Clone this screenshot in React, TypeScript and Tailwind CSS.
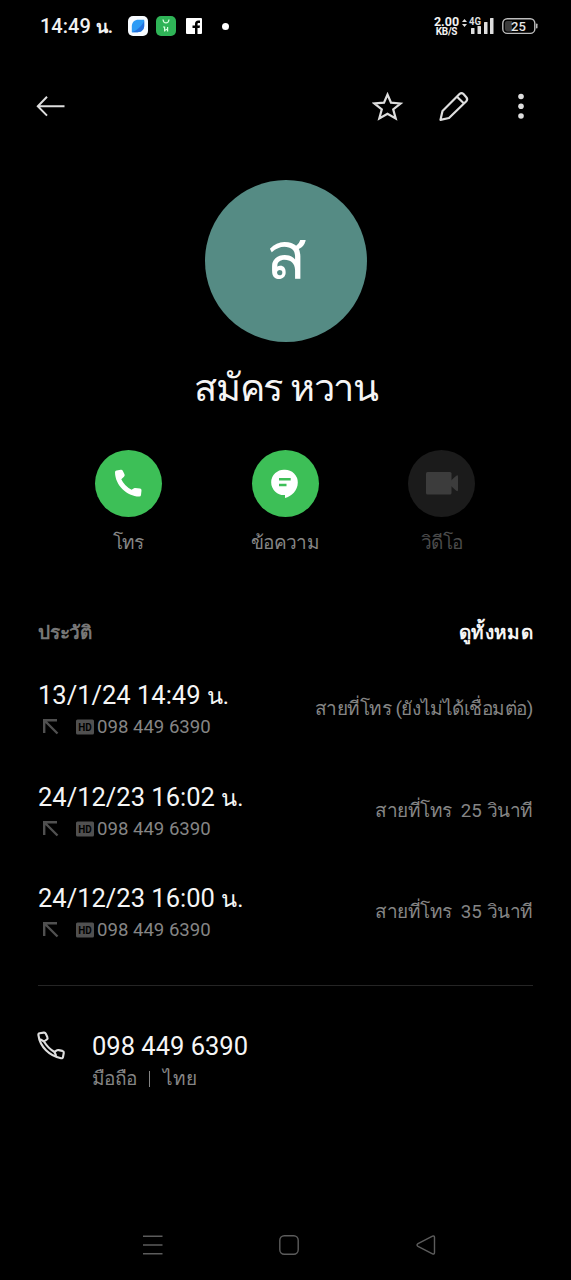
import React from 'react';

interface CallEntry {
    time: string;
    number: string;
    status: string;
    duration?: string;
    unit?: string;
}

const calls: CallEntry[] = [
    { time: '13/1/24 14:49', number: '098 449 6390', status: 'สายที่โทร (ยังไม่ได้เชื่อมต่อ)' },
    { time: '24/12/23 16:02', number: '098 449 6390', status: 'สายที่โทร', duration: '25', unit: 'วินาที' },
    { time: '24/12/23 16:00', number: '098 449 6390', status: 'สายที่โทร', duration: '35', unit: 'วินาที' },
];

const StatusBar: React.FC = () => (
    <div className="flex h-[52px] items-center pl-[40px] pr-[33px] text-[#f2f2f2]">
        <span className="w-[88px] whitespace-nowrap text-[20px] leading-[28px] font-medium">14:49 <span className="text-[18px] font-bold">น.</span></span>
        <svg className="h-5 w-5" viewBox="0 0 20 20">
            <rect width="20" height="20" rx="5" fill="#f7fbff" />
            <path d="M3.8 16.2V10.5C3.8 6.5 6.5 3.8 10.5 3.8H16.2V9.5C16.2 13.5 13.5 16.2 9.5 16.2Z" fill="#2d9bf5" />
            <path d="M3.8 16.2C9 14.5 14 10 16.2 5V9.5C16.2 13.5 13.5 16.2 9.5 16.2Z" fill="#2470dc" />
        </svg>
        <svg className="ml-2 h-5 w-5" viewBox="0 0 20 20" fill="none">
            <rect width="20" height="20" rx="5" fill="#2fb457" />
            <path d="M7 3.5C7.5 8 12.5 8 13 3.5" stroke="#d8ffe0" strokeWidth="1.2" />
            <path d="M7 11H8.6V15.5M11.6 11V15.5M8.6 14.5L11.6 13" stroke="#d8ffe0" strokeWidth="1.2" />
        </svg>
        <svg className="ml-[10px] h-4 w-4" viewBox="0 0 16 16">
            <rect width="16" height="16" rx="1" fill="#fff" />
            <path d="M9 16V10H6.5V7.5H9V6C9 3.8 10.2 2.5 12.3 2.5H14V5H12.7C11.8 5 11.5 5.4 11.5 6.2V7.5H14L13.6 10H11.5V16Z" fill="#000" />
        </svg>
        <span className="ml-[20px] h-[7px] w-[7px] rounded-full bg-white" />
        <div className="ml-auto flex w-[27px] flex-col items-center font-bold">
            <span className="text-[12.5px] leading-[11px]">2.00</span>
            <span className="text-[10px] leading-[9px] tracking-[-0.3px]">KB/S</span>
        </div>
        <svg className="ml-[2px] h-[22px] w-[34px]" viewBox="0 0 34 22" fill="#dedede">
            <path d="M0 7L2.5 4L5 7ZM0 9L2.5 12L5 9Z" />
            <text x="7" y="9.5" fontSize="10" fontWeight="700" textLength="12" lengthAdjust="spacingAndGlyphs">4G</text>
            <rect x="9" y="13" width="3.5" height="6" rx="0.5" />
            <rect x="15.5" y="11" width="3.5" height="8" rx="0.5" />
            <rect x="22" y="7" width="3.5" height="12" rx="0.5" />
            <rect x="28" y="3" width="3.5" height="16" rx="0.5" />
        </svg>
        <svg className="ml-[6px] h-[18px] w-9" viewBox="0 0 36 18">
            <rect x="0.8" y="1.8" width="32" height="14.6" rx="4.5" fill="none" stroke="#bdbdbd" strokeWidth="1.4" />
            <path d="M5 4H10V14.5H5Q3 14 3 12V6Q3 4 5 4Z" fill="#3b3b3b" />
            <rect x="34" y="6.5" width="1.5" height="5" rx="0.7" fill="#bdbdbd" />
            <text x="16.5" y="13.5" fontSize="13" fontWeight="500" textAnchor="middle" fill="#e6e6e6">25</text>
        </svg>
    </div>
);

const Toolbar: React.FC = () => (
    <div className="flex h-[108px] items-center pl-[36px] pr-[46px]">
        <svg className="h-7 w-[30px]" viewBox="0 0 30 28" fill="none" stroke="#dedede" strokeWidth="2">
            <path d="M28.5 14.2H2M11 4.8L1.8 14.2L11 23.6" />
        </svg>
        <svg className="ml-auto h-8 w-8" viewBox="0 0 32 32" fill="none" stroke="#dedede" strokeWidth="2.2">
            <path d="M15.5 4.5L19 12.7L28.5 13.5L21.2 19.4L23.7 28.5L15.5 23.7L7.3 28.5L9.8 19.4L2.5 13.5L12 12.7Z" />
        </svg>
        <svg className="ml-[34px] h-8 w-8" viewBox="0 0 32 32" fill="none" stroke="#dedede" strokeWidth="2.2" strokeLinejoin="round">
            <path d="M2.5 29.8L4.5 21L21.5 4Q23.5 2.2 25.5 4L28.3 7.2Q30 9.2 28.3 11.2L11 28Z" />
            <path d="M19 6.7L26 13.5" />
        </svg>
        <svg className="ml-[47px] h-8 w-2" viewBox="0 0 8 32" fill="#dedede">
            <circle cx="4" cy="6.5" r="2.8" />
            <circle cx="4" cy="16.2" r="2.8" />
            <circle cx="4" cy="26" r="2.8" />
        </svg>
    </div>
);

const PhoneIcon: React.FC = () => (
    <svg className="h-[30px] w-[30px]" viewBox="0 0 30 30" fill="#fff">
        <path d="M2 4.2Q2 2.8 3.5 2.6L7.8 1.8Q9.2 1.6 9.9 2.9L11.5 6.2Q12.1 7.6 11 8.7L8.3 11.3Q11.5 18.2 18.6 21.8L20.2 20.7Q21 20 22.2 20.1L27 20.6Q28.6 20.8 28.5 22.4L28 27Q27.8 28.7 26.1 28.6C14 28 2.2 17.5 2 4.2Z" />
    </svg>
);

const MessageIcon: React.FC = () => (
    <svg className="h-[30px] w-[30px]" viewBox="0 0 30 30">
        <path d="M15 1.7A12.7 12.7 0 1 0 15 27V30C21.5 28.2 27.8 22.5 27.8 14.4A12.8 12.7 0 0 0 15 1.7Z" fill="#fff" />
        <path d="M9 11.3H20.7M9 17H16.5" stroke="#3dbf57" strokeWidth="2.4" />
    </svg>
);

const VideoIcon: React.FC = () => (
    <svg className="h-6 w-[34px]" viewBox="0 0 34 24" fill="#3c3c3c">
        <rect x="1" y="1" width="25.5" height="22.5" rx="1.5" />
        <path d="M26 9.5L31 5Q33 3.5 33 5.5V19Q33 21 31 19.5L26 15Z" />
    </svg>
);

const Action: React.FC<{ label: string; disabled?: boolean; children: React.ReactNode }> = ({ label, disabled, children }) => (
    <button className="flex w-[156.7px] flex-col items-center">
        <span className={`flex h-[67px] w-[67px] items-center justify-center rounded-full ${disabled ? 'bg-[#1b1b1b]' : 'bg-[#3dbf57]'}`}>
            {children}
        </span>
        <span className={`mt-[12px] text-[19px] leading-[28px] tracking-[-0.7px] whitespace-nowrap ${disabled ? 'text-[#4b4b4b]' : 'text-[#858585]'}`}>{label}</span>
    </button>
);

const CallRow: React.FC<{ call: CallEntry }> = ({ call }) => (
    <div className="flex h-[101.7px] items-start justify-between">
        <div>
            <div className="h-[34px] text-[25.5px] leading-[34px] whitespace-nowrap text-[#f5f5f5]">{call.time} <span className="text-[23.5px]">น.</span></div>
            <div className="mt-[2px] flex h-[26px] items-center text-[18.6px] leading-[26px] text-[#858585]">
                <svg className="ml-[5px] h-4 w-4" viewBox="0 0 16 16" fill="none" stroke="#505050" strokeWidth="2.4">
                    <path d="M1.2 14V1.2H14M1.5 1.5L14.5 14.5" />
                </svg>
                <svg className="ml-[17px] h-4 w-[18px]" viewBox="0 0 18 16">
                    <rect width="18" height="15" y="0.5" rx="1.5" fill="#505050" />
                    <text x="9" y="12.2" fontSize="11.5" fontWeight="700" textAnchor="middle" fill="#000" textLength="13.5" lengthAdjust="spacingAndGlyphs">HD</text>
                </svg>
                <span className="ml-[3px] whitespace-nowrap">{call.number}</span>
            </div>
        </div>
        <div className="mt-[17px] flex items-baseline text-[19px] leading-[28px] tracking-[-0.47px] whitespace-nowrap text-[#858585]">
            <span>{call.status}</span>
            {call.duration && <span className="mr-[5px] ml-[9px] text-[18.7px] tracking-normal">{call.duration}</span>}
            {call.unit && <span>{call.unit}</span>}
        </div>
    </div>
);

const NavBar: React.FC = () => (
    <div className="mt-auto flex h-[70px] items-center pl-[143px] pr-[135px]">
        <svg className="h-5 w-5" viewBox="0 0 20 20" stroke="#5c5c5c" strokeWidth="1.4">
            <path d="M0 1.2H19.5M0 10H19.5M0 18.8H19.5" />
        </svg>
        <svg className="ml-[116px] h-5 w-5" viewBox="0 0 20 20" fill="none" stroke="#5c5c5c" strokeWidth="1.4">
            <rect x="0.8" y="0.8" width="18.4" height="18.4" rx="4.5" />
        </svg>
        <svg className="ml-auto h-5 w-5" viewBox="0 0 20 20" fill="none" stroke="#5c5c5c" strokeWidth="1.4" strokeLinejoin="round">
            <path d="M2 8.7L16.5 1.2Q18.5 0.4 18.5 2.5V17.5Q18.5 19.6 16.5 18.8L2 11.3Q0 10 2 8.7Z" />
        </svg>
    </div>
);

export default function App() {
    return (
        <div className="flex h-[1280px] w-[571px] flex-col overflow-hidden bg-black font-[Roboto,'Noto_Sans',sans-serif]">
            <StatusBar />
            <Toolbar />

            <div className="mt-[19.5px] ml-px flex flex-col items-center">
                <div className="flex h-[162px] w-[162px] items-center justify-center rounded-full bg-[#558b84] pb-[10px] text-[67px] leading-[80px] text-white">ส</div>
                <h1 className="mt-[20px] h-[52px] text-[38px] leading-[52px] tracking-[-1.3px] whitespace-nowrap text-[#f5f5f5]">สมัคร หวาน</h1>
            </div>

            <div className="mt-[36px] -ml-px flex justify-center">
                <Action label="โทร"><PhoneIcon /></Action>
                <Action label="ข้อความ"><MessageIcon /></Action>
                <Action label="วิดีโอ" disabled><VideoIcon /></Action>
            </div>

            <div className="mt-[62px] flex h-[28px] items-center justify-between px-[38px] text-[19px] leading-[28px] font-bold">
                <span className="tracking-[-0.2px] text-[#777777]">ประวัติ</span>
                <span className="tracking-[0.3px] text-[#f5f5f5]">ดูทั้งหมด</span>
            </div>

            <div className="mt-[31.5px] px-[38px]">
                {calls.map((call) => (
                    <CallRow key={call.time} call={call} />
                ))}
            </div>

            <div className="mx-[38px] mt-[1.5px] h-px shrink-0 bg-[#252525]" />

            <div className="mt-[43px] flex pl-[36px]">
                <svg className="mt-px h-[30px] w-[30px]" viewBox="0 0 30 30" fill="none" stroke="#dedede" strokeWidth="2.1" strokeLinejoin="round">
                    <path d="M2.4 5Q2.2 3.5 3.7 3.2L7.8 2.6Q9.2 2.4 9.8 3.7L11.3 7Q12 8.5 10.8 9.5L8 11.5Q12 18.2 18.5 22L20.4 20.6Q21.4 19.9 22.6 20.1L26.4 20.9Q28 21.3 27.8 22.8L27 27Q26.7 28.6 25 28.2C13.5 25.8 4 17 2.4 5Z" />
                    <path d="M4 9.2L8 11.5M18.5 22L20.2 26" />
                </svg>
                <div className="ml-[26px]">
                    <div className="text-[25.5px] leading-[34px] whitespace-nowrap text-[#f5f5f5]">098 449 6390</div>
                    <div className="mt-[2px] flex h-[28px] items-center text-[19px] leading-[28px] text-[#858585]">
                        <span className="tracking-[-0.6px]">มือถือ</span>
                        <span className="mr-[13px] ml-[12px] h-[16px] w-px bg-[#858585]" />
                        <span>ไทย</span>
                    </div>
                </div>
            </div>

            <NavBar />
        </div>
    );
}
